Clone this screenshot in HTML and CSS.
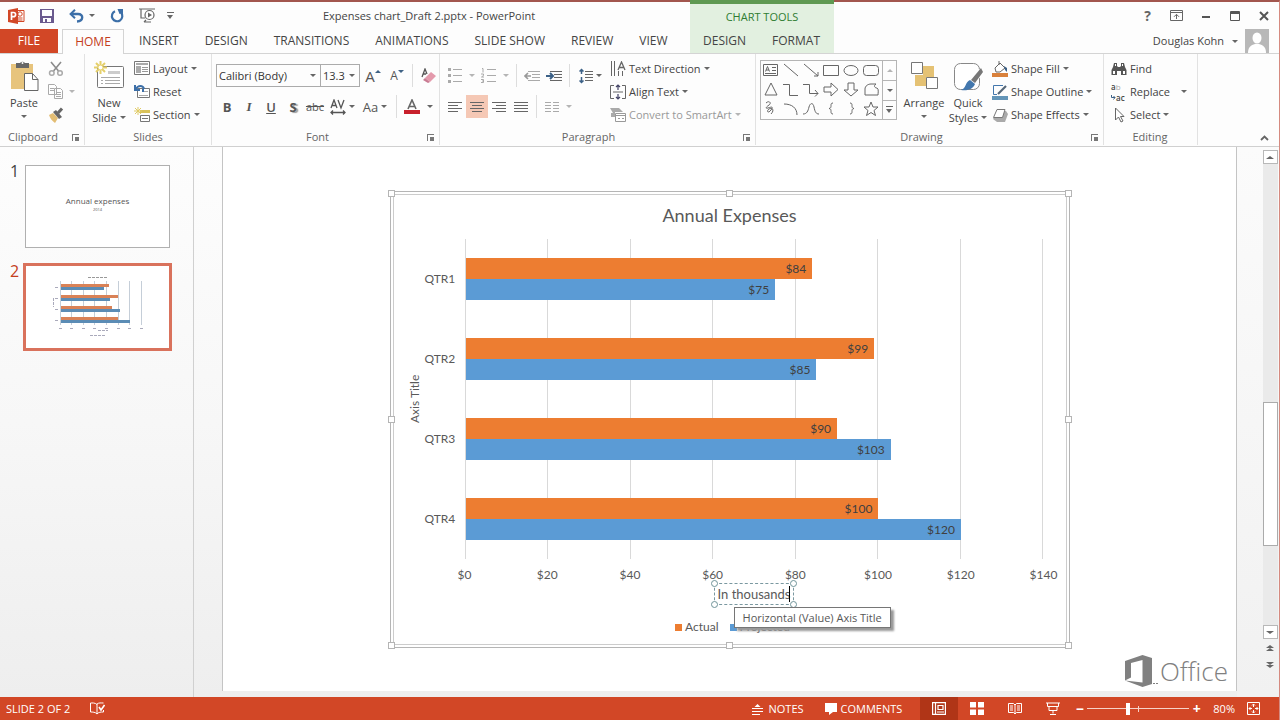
FILE: index.html
```html
<!DOCTYPE html>
<html lang="en">
<head>
<meta charset="utf-8">
<title>Expenses chart_Draft 2.pptx - PowerPoint</title>
<link rel="stylesheet" href="styles.css">
</head>
<body>
<div class="app">
  <header class="header">
    <div class="titlebar">
      <div class="qat">
        <svg class="app-icon" width="17" height="16" viewBox="0 0 17 16"><path fill="#fff" stroke="#d24726" d="M9 2.5h7v11H9z"/><circle cx="12" cy="6" r="2.2" fill="none" stroke="#d24726"/><path stroke="#d24726" d="M10 10h4.500M10 12h4.500"/><path fill="#d24726" d="M0 2l10-2v16L0 14z"/><path fill="none" stroke="#fff" stroke-width="1.700" d="M3.500 12V4.500h2a2 2 0 0 1 0 4.200h-2"/></svg>
        <button class="qbtn" aria-label="Save"><svg width="14" height="14" viewBox="0 0 14 14"><path fill="#6a5a8e" d="M0 0h14v14H0zM2 1v6h10V1zM3 9v4h2v-3h2v3h4V9z" fill-rule="evenodd"/></svg></button>
        <button class="qbtn undo" aria-label="Undo"><svg width="15" height="14" viewBox="0 0 15 14"><path fill="none" stroke="#3c6fa8" stroke-width="2.400" d="M2 5h7c6 0 5.500 7-1 7.500"/><path fill="none" stroke="#3c6fa8" stroke-width="2" d="M6 0.800L1.600 5 6 9.200"/></svg><i class="caret"></i></button>
        <button class="qbtn" aria-label="Repeat"><svg width="14" height="14" viewBox="0 0 14 14"><path fill="none" stroke="#3c6fa8" stroke-width="2.200" d="M5 2.300a5.200 5.200 0 1 0 6 1.300"/><path fill="#3c6fa8" d="M7.500 0H13v6l-2-1.500L9.500 5z"/></svg></button>
        <button class="qbtn" aria-label="Start From Beginning"><svg width="17" height="15" viewBox="0 0 17 15"><path fill="none" stroke="#666" stroke-width="1.200" d="M0 1h16M2 1v9h4M5 14h7M7 12l-2 2"/><circle cx="10.500" cy="7" r="4.500" fill="#fff" stroke="#666" stroke-width="1.200"/><path fill="#666" d="M9 4.500l4 2.500-4 2.500z"/></svg></button>
        <button class="qbtn custom" aria-label="Customize Quick Access Toolbar"><i class="caret bar"></i></button>
      </div>
      <h1 class="doc-title">Expenses chart_Draft 2.pptx - PowerPoint</h1>
    </div>
    <nav class="tabs">
      <button class="tab file">FILE</button>
      <button class="tab home">HOME</button>
      <button class="tab">INSERT</button>
      <button class="tab">DESIGN</button>
      <button class="tab">TRANSITIONS</button>
      <button class="tab">ANIMATIONS</button>
      <button class="tab">SLIDE SHOW</button>
      <button class="tab">REVIEW</button>
      <button class="tab">VIEW</button>
    </nav>
    <div class="context">
      <div class="context-title">CHART TOOLS</div>
      <div class="context-tabs"><button class="tab">DESIGN</button><button class="tab">FORMAT</button></div>
    </div>
    <div class="window-buttons">
      <button class="wbtn help" aria-label="Help">?</button>
      <button class="wbtn" aria-label="Ribbon Display Options"><svg width="13" height="11" viewBox="0 0 13 11"><path fill="none" stroke="#666" d="M.5.500h12v10H.5zM.5 2.500h12M6.500 9V4.500M4 6.800l2.500-2.500L9 6.800"/></svg></button>
      <button class="wbtn" aria-label="Minimize"><svg width="10" height="11" viewBox="0 0 10 11"><path stroke="#555" stroke-width="2" d="M1 7h8"/></svg></button>
      <button class="wbtn" aria-label="Restore"><svg width="10" height="10" viewBox="0 0 10 10"><path fill="none" stroke="#555" d="M.5.500h9v9h-9z"/><path stroke="#555" stroke-width="2" d="M0 2h10"/></svg></button>
      <button class="wbtn" aria-label="Close"><svg width="10" height="10" viewBox="0 0 10 10"><path stroke="#555" stroke-width="2" d="M1 1l8 8M9 1L1 9"/></svg></button>
    </div>
    <div class="account">
      <button class="user">Douglas Kohn<i class="caret"></i></button>
      <svg width="24" height="24" viewBox="0 0 24 24"><path fill="#b8b8b8" d="M0 0h24v24H0z"/><ellipse cx="12" cy="9" rx="4.500" ry="5.500" fill="#fff"/><path fill="#fff" d="M3 24c0-6 3-8 7-9h4c4 1 7 3 7 9z"/></svg>
    </div>
  </header>

  <div class="ribbon">
    <section class="group clipboard">
      <div class="body">
        <button class="big paste"><svg width="29" height="32" viewBox="0 0 29 32"><path fill="#e7c47d" d="M1 4h22v25H1z"/><path fill="#666" d="M6 3h4a3 3 0 0 1 5 0h4v5H6z"/><circle cx="12.500" cy="3" r="1" fill="#fff"/><path fill="#fff" stroke="#666" d="M14.500 13.500h8l5.500 6v11H14.500zM22.500 13.500v6H28"/></svg><span>Paste</span><i class="caret"></i></button>
        <div class="stack icons">
          <button class="row" aria-label="Cut"><svg width="16" height="16" viewBox="0 0 16 16"><path fill="none" stroke="#8b8b8b" stroke-width="1.600" d="M3 1l7.500 9M13 1L5.500 10"/><circle cx="3.800" cy="12" r="2.300" fill="none" stroke="#aaa" stroke-width="1.500"/><circle cx="12" cy="12" r="2.300" fill="none" stroke="#aaa" stroke-width="1.500"/></svg></button>
          <button class="row" aria-label="Copy"><svg width="16" height="15" viewBox="0 0 16 15"><path fill="#fff" stroke="#aaa" d="M.5.500h6l2 2v8h-8zM2 4.500h4M2 6.500h4M6.500 4.500h6l2 2v8h-8zM8 8.500h5M8 10.500h5M8 12.500h5"/></svg><i class="caret pale"></i></button>
          <button class="row" aria-label="Format Painter"><svg width="16" height="16" viewBox="0 0 16 16"><path fill="#e3bd73" d="M1 8l4-2 5 5-3 5C4 14 2 11 1 8z"/><path fill="#666" d="M5 5l3-2 6 7-3 2z"/><path stroke="#666" stroke-width="3" d="M10 6l4-4.500"/></svg></button>
        </div>
      </div>
      <footer>Clipboard<i class="launch"></i></footer>
    </section>
    <section class="group slides">
      <div class="body">
        <button class="big newslide"><svg width="31" height="32" viewBox="0 0 31 32"><rect x="3.500" y="6.500" width="26" height="21" rx="1" fill="#fff" stroke="#777"/><path fill="#ccc" d="M14 11h12v3H14z"/><path stroke="#aaa" d="M7 17.500h19M7 20.500h2m2 0h15M7 23.500h2m2 0h15"/><path stroke="#e5d06b" stroke-width="2" d="M6.500 1v13M0 7.500h13M2 3l9 9M11 3l-9 9"/><circle cx="6.500" cy="7.500" r="2" fill="#fff"/></svg><span>New</span><span>Slide<i class="caret"></i></span></button>
        <div class="stack">
          <button class="row"><svg width="16" height="15" viewBox="0 0 16 15"><path fill="#fff" stroke="#777" d="M.5.500h15v13H.5z"/><path fill="#aaa" d="M2 2h12v2H2zM2 5h5v7H2z"/><path stroke="#999" d="M8 6.500h6M8 8.500h6M8 10.500h6"/></svg>Layout<i class="caret"></i></button>
          <button class="row"><svg width="16" height="15" viewBox="0 0 16 15"><path fill="#fff" stroke="#777" d="M3.500 4.500h12v9h-12z"/><path stroke="#aaa" d="M10 7.500h4M5 11.500h9"/><path fill="none" stroke="#3c6fa8" stroke-width="2" d="M2 5c2-4 7-4 8 0M1 1v5h5M9 5v3"/></svg>Reset</button>
          <button class="row"><svg width="16" height="16" viewBox="0 0 16 16"><path fill="#fff" stroke="#777" d="M6.500 8.500h9v6h-9zM8 11.500h6"/><path fill="#d9c25a" d="M6 3h10v3H6z"/><path stroke="#e0cb66" d="M4 0v8M0 4h8M1 1l6 6M7 1L1 7"/></svg>Section<i class="caret"></i></button>
        </div>
      </div>
      <footer>Slides</footer>
    </section>
    <section class="group font">
      <div class="body lines">
        <div class="line">
          <span class="combo family"><select aria-label="Font"><option>Calibri (Body)</option></select><i class="caret"></i></span>
          <span class="combo size"><select aria-label="Font Size"><option>13.3</option></select><i class="caret"></i></span>
          <button class="tool w26" aria-label="Increase Font Size"><span class="letter">A</span><svg width="6" height="14" viewBox="0 0 6 14"><path fill="#3f6285" d="M0 4l3-3 3 3z"/></svg></button>
          <button class="tool w22" aria-label="Decrease Font Size"><span class="letter small">A</span><svg width="6" height="14" viewBox="0 0 6 14"><path fill="#3f6285" d="M0 1l3 3 3-3z"/></svg></button>
          <i class="sep"></i>
          <button class="tool w22" aria-label="Clear All Formatting"><svg width="15" height="16" viewBox="0 0 15 16"><path fill="none" stroke="#555" stroke-width="1.300" d="M1 9L4 1l2 5M2 6h3"/><path fill="#e49aac" d="M10 4l5 4-6 6-5-4z"/><path fill="#c97b93" d="M4 10l5 4-2 1-5-3z"/></svg></button>
        </div>
        <div class="line">
          <button class="tool w22 b">B</button>
          <button class="tool w22 i">I</button>
          <button class="tool w22 u">U</button>
          <button class="tool w22 s">S</button>
          <button class="tool w22 strike">abc</button>
          <button class="tool w32" aria-label="Character Spacing"><svg width="16" height="16" viewBox="0 0 16 16"><path fill="none" stroke="#555" stroke-width="1.300" d="M1 9l3-8 3 8M2 6.500h4M8 1l3 8 3-8M1 13.500h14M3 11.500l-2 2 2 2M13 11.500l2 2-2 2"/></svg><i class="caret"></i></button>
          <button class="tool w34 case">Aa<i class="caret"></i></button>
          <i class="sep"></i>
          <button class="tool w34" aria-label="Font Color"><svg width="16" height="16" viewBox="0 0 16 16"><path fill="none" stroke="#666" stroke-width="1.600" d="M4 10L8 1l4 9M5 7.500h6"/><path fill="#c8202c" d="M0 11h16v4H0z"/></svg><i class="caret far"></i></button>
        </div>
      </div>
      <footer>Font<i class="launch"></i></footer>
    </section>
    <section class="group paragraph">
      <div class="body">
        <div class="lines paratools">
          <div class="line">
            <button class="tool w34" aria-label="Bullets"><svg width="14" height="15" viewBox="0 0 14 15"><path fill="#aaa" d="M0 0h3v3H0zM0 6h3v3H0zM0 12h3v3H0z"/><path stroke="#aaa" d="M5 1.500h9M5 7.500h9M5 13.500h9"/></svg><i class="caret far pale"></i></button>
            <button class="tool w34" aria-label="Numbering"><svg width="15" height="15" viewBox="0 0 15 15"><path fill="none" stroke="#aaa" d="M1 .500h1v4M0 6h2.500v1.500L.5 9H3M0 11.500h2.500v3H0M1 13h1.500M6 1.500h9M6 7.500h9M6 13.500h9"/></svg><i class="caret far pale"></i></button>
            <i class="sep"></i>
            <button class="tool w22" aria-label="Decrease List Level"><svg width="16" height="12" viewBox="0 0 16 12"><path stroke="#aaa" d="M4 1.500h12M8 4.500h8M8 7.500h8M4 10.500h12"/><path fill="none" stroke="#999" stroke-width="1.600" d="M7 6H1M4 3L1 6l3 3"/></svg></button>
            <button class="tool w22" aria-label="Increase List Level"><svg width="16" height="12" viewBox="0 0 16 12"><path stroke="#666" d="M4 1.500h12M8 4.500h8M8 7.500h8M4 10.500h12"/><path fill="none" stroke="#3c6187" stroke-width="2" d="M0 6h7M4 3l3 3-3 3"/></svg></button>
            <i class="sep"></i>
            <button class="tool w32" aria-label="Line Spacing"><svg width="14" height="16" viewBox="0 0 14 16"><path stroke="#666" d="M6 3.500h8M6 6.500h8M6 9.500h8M6 12.500h8"/><path fill="none" stroke="#3c6187" stroke-width="1.500" d="M2.500 1v5M.5 3.500l2-2 2 2M2.500 9v6M.5 12.500l2 2 2-2"/></svg><i class="caret"></i></button>
          </div>
          <div class="line">
            <button class="tool w22" aria-label="Align Left"><svg width="14" height="12" viewBox="0 0 14 12"><path stroke="#666" d="M0 1.500h14M0 4.500h10M0 7.500h14M0 10.500h10"/></svg></button>
            <button class="tool w22 active" aria-label="Center"><svg width="14" height="12" viewBox="0 0 14 12"><path stroke="#666" d="M0 1.500h14M2 4.500h10M0 7.500h14M2 10.500h10"/></svg></button>
            <button class="tool w22" aria-label="Align Right"><svg width="14" height="12" viewBox="0 0 14 12"><path stroke="#666" d="M0 1.500h14M4 4.500h10M0 7.500h14M4 10.500h10"/></svg></button>
            <button class="tool w22" aria-label="Justify"><svg width="14" height="12" viewBox="0 0 14 12"><path stroke="#666" d="M0 1.500h14M0 4.500h14M0 7.500h14M0 10.500h14"/></svg></button>
            <i class="sep"></i>
            <button class="tool w34" aria-label="Columns"><svg width="14" height="12" viewBox="0 0 14 12"><path stroke="#aaa" d="M0 1.500h6m2 0h6M0 4.500h6m2 0h6M0 7.500h6m2 0h6M0 10.500h6m2 0h6"/></svg><i class="caret far pale"></i></button>
          </div>
        </div>
        <div class="stack">
          <button class="row"><svg width="16" height="16" viewBox="0 0 16 16"><path stroke="#666" d="M1.500 0v15M4.500 0v15M8.500 10v5M12.500 10v5"/><path fill="none" stroke="#666" stroke-width="1.300" d="M8 9l3.500-8L15 9M9 6.500h5"/></svg>Text Direction<i class="caret"></i></button>
          <button class="row"><svg width="16" height="16" viewBox="0 0 16 16"><path fill="none" stroke="#666" d="M4 1.500H.5v13H4M12 1.500h3.500v13H12M3 8h10"/><path fill="none" stroke="#446" stroke-width="1.200" d="M8 1v5M6 3l2-2 2 2M8 10v5M6 13l2 2 2-2"/></svg>Align Text<i class="caret"></i></button>
          <button class="row disabled" disabled><svg width="16" height="16" viewBox="0 0 16 16"><path fill="#aaa" d="M0 1h9l4 4H5v5H1V6h2z"/><path fill="#fff" stroke="#999" d="M5.500 6.500h10v8h-10zM5 8.500h11M8 11.500h2m2 0h2"/></svg>Convert to SmartArt<i class="caret pale"></i></button>
        </div>
      </div>
      <footer>Paragraph<i class="launch"></i></footer>
    </section>
    <section class="group drawing">
      <div class="body">
        <div class="gallery">
          <div class="shapes">
            <svg viewBox="0 0 20 19"><path d="M2.500 3.500h14v11h-14zM11 6.500h4M11 9.500h4M4 12.500h11M4.500 10.500l2-5 2 5M5 9h3"/></svg>
            <svg viewBox="0 0 20 19"><path d="M3 3l14 12"/></svg>
            <svg viewBox="0 0 20 19"><path d="M3 3l14 12M17 11v4h-4"/></svg>
            <svg viewBox="0 0 20 19"><path d="M2.500 4.500h15v10h-15z"/></svg>
            <svg viewBox="0 0 20 19"><ellipse cx="10" cy="9.500" rx="7" ry="5"/></svg>
            <svg viewBox="0 0 20 19"><rect x="2.500" y="4.500" width="15" height="10" rx="3"/></svg>
            <svg viewBox="0 0 20 19"><path d="M10 3l6 12H4z"/></svg>
            <svg viewBox="0 0 20 19"><path d="M2 4.500h6.500v11H17"/></svg>
            <svg viewBox="0 0 20 19"><path d="M2 4.500h6.500v9H17M14 10l3 3.500-3 3"/></svg>
            <svg viewBox="0 0 20 19"><path d="M3 7h7V3l7 6.500-7 6.500v-4H3z"/></svg>
            <svg viewBox="0 0 20 19"><path d="M7 3h6v7h4l-7 6-7-6h4z"/></svg>
            <svg viewBox="0 0 20 19"><path d="M4 15V9c0-3 3-5 6-5h5c-3 2-1 4 1 4 2 1 1 5 1 7z"/></svg>
            <svg viewBox="0 0 20 19"><path d="M5 4c3-3 6 0 3 2s-4 4-1 3 6-2 3 2-5 1-2-1 6 1 2 5"/></svg>
            <svg viewBox="0 0 20 19"><path d="M3 5c8 0 13 4 13 11"/></svg>
            <svg viewBox="0 0 20 19"><path d="M2 15c4 0 5-3 6-7s4-5 5 0 2 7 5 7"/></svg>
            <svg viewBox="0 0 20 19"><path d="M12 4c-4 0 0 5-4 5.500 4 .500 0 5.500 4 5.500"/></svg>
            <svg viewBox="0 0 20 19"><path d="M9 4c4 0 0 5 4 5.500-4 .500 0 5.500-4 5.500"/></svg>
            <svg viewBox="0 0 20 19"><path d="M10 3l2 5h5l-4 3.500 1.500 5-4.500-3-4.500 3L7 11.500 3 8h5z"/></svg>
          </div>
          <div class="gallery-nav"><button aria-label="Previous shapes"><i class="caret up pale"></i></button><button aria-label="Next shapes"><i class="caret"></i></button><button aria-label="More shapes"><i class="caret bar"></i></button></div>
        </div>
        <button class="big arrange"><svg width="28" height="32" viewBox="0 0 28 32"><path fill="#e5c274" d="M13 6h11v11H13zM5 15h11v11H5z"/><path fill="#fff" stroke="#777" d="M1.500 2.500h11v11h-11zM16.500 17.500h11v11h-11z"/></svg><span>Arrange</span><i class="caret"></i></button>
        <button class="big quick"><svg width="31" height="32" viewBox="0 0 31 32"><rect x="1.500" y="3.500" width="25" height="26" rx="6" fill="#fff" stroke="#888"/><path stroke="#fff" stroke-width="6" d="M29 11L16 25"/><path fill="#777" d="M28 8l2 4-8 11-4-3z"/><path fill="#4377ad" d="M17 20l5 4c-2 5-7 7-14 6 5-1 4-8 9-10z"/></svg><span>Quick</span><span>Styles<i class="caret"></i></span></button>
        <div class="stack">
          <button class="row"><svg width="16" height="16" viewBox="0 0 16 16"><path fill="#d9813c" d="M0 12h16v4H0z"/><path fill="#fff" stroke="#666" d="M3 7l5-5 5 5-5 4H4zM7 4V0"/><path fill="#3c6187" d="M12 5l3 2v4l-2-2z"/></svg>Shape Fill<i class="caret"></i></button>
          <button class="row"><svg width="16" height="16" viewBox="0 0 16 16"><path fill="#6395b8" d="M0 12h16v4H0z"/><path fill="none" stroke="#4377ad" d="M11 1.500H1.500v9H5"/><path stroke="#567" stroke-width="2.200" d="M6 10l8-8"/></svg>Shape Outline<i class="caret"></i></button>
          <button class="row"><svg width="16" height="16" viewBox="0 0 16 16"><path fill="#aaa" d="M6 4h8l2 3-3 8H5l-4-3z"/><path fill="#fff" stroke="#777" d="M5 2.500h8l-2.500 8H1.500z"/></svg>Shape Effects<i class="caret"></i></button>
        </div>
      </div>
      <footer>Drawing<i class="launch"></i></footer>
    </section>
    <section class="group editing">
      <div class="body">
        <div class="stack">
          <button class="row"><svg width="16" height="14" viewBox="0 0 16 14"><path fill="#555" d="M3 1h3v3l1 1h2l1-1V1h3l1 4 1.500 3v5H10V9H6v4H.5V8L2 5z"/><path fill="#fff" d="M2 9h2v3H2zM12 9h2v3h-2zM4 2h1v2H4zM11 2h1v2h-1z"/></svg>Find</button>
          <button class="row"><span class="replace-icon" aria-hidden="true"><b>a<em>b</em></b><b><svg width="5" height="5" viewBox="0 0 5 5"><path fill="none" stroke="#3c6187" d="M.5 0v2.500H4M2.500 1L4 2.500l-1.500 2"/></svg>ac</b></span>Replace<i class="caret far"></i></button>
          <button class="row"><svg width="16" height="16" viewBox="0 0 16 16"><path fill="#fff" stroke="#666" d="M4.500 1v12l3-3 2.500 5 2-1-2.500-4.500h3.500z"/></svg>Select<i class="caret"></i></button>
        </div>
      </div>
      <footer>Editing</footer>
    </section>
    <button class="collapse" aria-label="Collapse the Ribbon"><svg width="9" height="6" viewBox="0 0 9 6"><path fill="none" stroke="#666" stroke-width="1.800" d="M1 5l3.500-3.500L8 5"/></svg></button>
  </div>

  <main class="workspace">
    <aside class="thumbs">
      <div class="thumb"><span class="num">1</span><button class="preview" aria-label="Slide 1"><span class="p-title">Annual expenses</span><span class="p-sub">2014</span></button></div>
      <div class="thumb selected"><span class="num">2</span><button class="preview" aria-label="Slide 2">
        <svg width="95" height="66" viewBox="0 0 95 66"><path stroke="#999" d="M38 3.500h20" stroke-dasharray="3 1"/><path stroke="#c5ced8" d="M10.500 7v44M21.500 7v44M33.500 7v44M44.500 7v44M56.500 7v44M68.500 7v44M79.500 7v44M91.500 7v44"/><path fill="#d98257" d="M11 10h48v3H11zM11 21h57v3H11zM11 32h51v3H11zM11 43h57v3H11z"/><path fill="#5b8cb5" d="M11 13h43v3H11zM11 24h49v3H11zM11 35h59v3H11zM11 46h69v3H11z"/><path stroke="#aab" d="M5 13.500h4M5 24.500h4M5 35.500h4M5 46.500h4M3.500 24v9M9 54.500h3m8 0h3m9 0h3m8 0h3m9 0h3m9 0h3m8 0h3m9 0h3M48 56.500h10M40 61.500h16" stroke-dasharray="3 1"/></svg>
      </button></div>
    </aside>
    <div class="gutter"></div>
    <section class="slide">
      <figure class="chart">
        <i class="handle tl"></i><i class="handle tc"></i><i class="handle tr"></i><i class="handle ml"></i><i class="handle mr"></i><i class="handle bl"></i><i class="handle bc"></i><i class="handle br"></i>
        <figcaption>Annual Expenses</figcaption>
        <div class="chart-body">
          <div class="y-title"><span>Axis Title</span></div>
          <div class="cats"><span>QTR1</span><span>QTR2</span><span>QTR3</span><span>QTR4</span></div>
          <div class="plot">
            <div class="grid"><i></i><i></i><i></i><i></i><i></i><i></i><i></i><i></i></div>
            <div class="bars">
              <div class="pair"><div class="bar actual" style="width:60%">$84</div><div class="bar projected" style="width:53.570%">$75</div></div>
              <div class="pair"><div class="bar actual" style="width:70.710%">$99</div><div class="bar projected" style="width:60.710%">$85</div></div>
              <div class="pair"><div class="bar actual" style="width:64.290%">$90</div><div class="bar projected" style="width:73.570%">$103</div></div>
              <div class="pair"><div class="bar actual" style="width:71.430%">$100</div><div class="bar projected" style="width:85.710%">$120</div></div>
            </div>
          </div>
          <div class="ticks"><span>$0</span><span>$20</span><span>$40</span><span>$60</span><span>$80</span><span>$100</span><span>$120</span><span>$140</span></div>
          <div class="x-title"><div class="x-box">In thousands<i class="dot a"></i><i class="dot b"></i><i class="dot c"></i><i class="dot d"></i><div class="tooltip" role="tooltip">Horizontal (Value) Axis Title</div></div></div>
        </div>
        <div class="legend"><span class="key actual-key"></span>Actual<span class="key projected-key"></span>Projected</div>
      </figure>
      <div class="office"><svg width="33" height="32" viewBox="0 0 33 32"><path fill="#808080" d="M0 6L17.500 0 27 3v26l-9.500 3L0 25.500l17.500 2V5L6 8v14.500L0 25.500z"/><path fill="#808080" d="M28 28h2v1h-2zM31 28h2v1h-2z"/></svg>Office</div>
    </section>
    <div class="scroll">
      <button class="sb" aria-label="Scroll up"><i class="caret up"></i></button>
      <div class="track"><div class="grip"></div></div>
      <button class="sb" aria-label="Scroll down"><i class="caret"></i></button>
      <button class="sp" aria-label="Previous Slide"><i class="caret up"></i><i class="caret up"></i></button>
      <button class="sp" aria-label="Next Slide"><i class="caret"></i><i class="caret"></i></button>
    </div>
  </main>

  <footer class="status">
    <span>SLIDE 2 OF 2</span>
    <button class="proof" aria-label="Spelling"><svg width="15" height="13" viewBox="0 0 15 13"><path fill="none" stroke="#fff" d="M7 2.500C5 .500 2 1 .5 1v9c2 0 5 0 6.500 2 1.500-2 4-2 6.500-2V8M7 2v10M7 2c2-1.500 4-1 6.500-1"/><path fill="none" stroke="#fff" stroke-width="1.600" d="M9 5l2 3 3.500-5"/></svg></button>
    <button class="notes"><svg width="11" height="12" viewBox="0 0 11 12"><path stroke="#fff" d="M0 5.500h11M0 8.500h11M0 11.500h8"/><path fill="#fff" d="M2.500 4l3-3 3 3z"/></svg>NOTES</button>
    <button class="comments"><svg width="12" height="12" viewBox="0 0 12 12"><path fill="#fff" d="M0 0h12v9H8l-4 3V9H0z"/></svg>COMMENTS</button>
    <div class="views">
      <button class="on" aria-label="Normal"><svg width="14" height="13" viewBox="0 0 14 13"><path fill="none" stroke="#fff" stroke-width="1.200" d="M.6.600h12.800v11.800H.6zM3.500 1v11M6 3.500h5v4H6zM5 10h7"/></svg></button>
      <button aria-label="Slide Sorter"><svg width="14" height="13" viewBox="0 0 14 13"><path fill="#fff" d="M0 0h6v5.500H0zM8 0h6v5.500H8zM0 7.500h6V13H0zM8 7.500h6V13H8z"/></svg></button>
      <button aria-label="Reading View"><svg width="14" height="13" viewBox="0 0 14 13"><path fill="none" stroke="#fff" d="M.5 1.500h5L7 3l1.500-1.500h5v9h-5L7 12l-1.500-1.500h-5zM7 3v9M2 4h3M2 6h3M2 8h3M9 4h3M9 6h3M9 8h3"/></svg></button>
      <button aria-label="Slide Show"><svg width="14" height="13" viewBox="0 0 14 13"><path fill="none" stroke="#fff" d="M0 1h14M1.500 1v3.500h11V1M3 5v3.500h8V5M7 8.500v3M4 12.500h6"/></svg></button>
    </div>
    <button class="zoom" aria-label="Zoom out">−</button>
    <input type="range" class="slider" aria-label="Zoom level" min="0" max="100" value="39">
    <button class="zoom" aria-label="Zoom in">+</button>
    <span class="pct">80%</span>
    <button class="fit" aria-label="Fit slide to window"><svg width="13" height="13" viewBox="0 0 13 13"><path fill="none" stroke="#fff" d="M.5.500h12v12H.5zM6.500 2v3M6.500 8v3M2 6.500h3M8 6.500h3M5 3.500l1.500-1.500L8 3.500M5 9.500L6.500 11 8 9.500M3.500 5L2 6.500 3.500 8M9.500 5L11 6.500 9.500 8"/></svg></button>
  </footer>
</div>
</body>
</html>
```
FILE: styles.css
```css
* { box-sizing: border-box; }
body { margin: 0; font: 11px/16px "Open Sans", "Noto Sans", sans-serif; color: #444; background: #fff; }
button { font: inherit; color: inherit; background: none; border: 0; padding: 0; display: flex; align-items: center; white-space: nowrap; }
svg { flex: none; }
.app { min-height: 100vh; display: flex; flex-direction: column; border-top: 2px solid #a2564e; border-right: 1px solid #d58a80; background: #fdfdfd; }

.caret { flex: none; width: 0; height: 0; border: 3px solid transparent; border-top-color: #666; border-bottom: 0; margin-left: 4px; }
.caret.up { border-top: 0; border-bottom: 3px solid #666; }
.caret.pale { border-top-color: #b5b5b5; }
.caret.up.pale { border-bottom-color: #b5b5b5; }
.caret.bar { width: 7px; height: 7px; border: 0; margin: 0; background: linear-gradient(#666, #666) top / 7px 1px no-repeat; display: flex; align-items: flex-end; }
.caret.bar::after { content: ""; border: 3px solid transparent; border-top: 4px solid #666; border-bottom: 0; }

/* Header */
.header { display: grid; grid-template-columns: minmax(0, 690px) 144px 1fr; grid-template-rows: 27px 24px; border-bottom: 1px solid #d4d4d4; }
.titlebar { display: flex; align-items: center; }
.qat { display: flex; align-items: center; gap: 15px; width: 168px; padding-left: 8px; }
.qat .undo .caret { margin-left: 5px; }
.qat .custom { margin-left: -4px; }
.doc-title { flex: 1; margin: 0; font-size: 11px; font-weight: 400; text-align: center; }
.tabs { grid-row: 2; grid-column: 1; display: flex; }
.tab { flex: none; padding: 0 13px; font-size: 12px; color: #444; }
.tab.file { width: 58px; justify-content: center; padding: 0; background: #d24726; color: #fff; margin-right: 4px; }
.tab.home { width: 62px; justify-content: center; padding: 0 0 1px; color: #c43e1c; border: 1px solid #d4d4d4; border-bottom: 0; background: #fdfdfd; margin-bottom: -1px; margin-right: 2px; }
.context { grid-row: 1 / 3; grid-column: 2; display: grid; grid-template-rows: 25px 24px; background: #e2f0e0; margin-top: -2px; border-top: 4px solid #5f9952; }
.context-title { text-align: center; line-height: 25px; color: #2f7d32; }
.context-tabs { display: flex; }
.window-buttons { grid-column: 3; grid-row: 1; display: flex; justify-content: flex-end; padding-right: 1px; }
.wbtn { width: 29px; justify-content: center; }
.help { font-size: 14px; font-weight: 700; color: #666; }
.account { grid-column: 3; grid-row: 2; display: flex; justify-content: flex-end; gap: 7px; padding-right: 10px; }
.user .caret { margin-left: 8px; }

/* Ribbon */
.ribbon { display: flex; height: 93px; border-bottom: 1px solid #d0d0d0; }
.group { display: flex; flex-direction: column; padding-top: 3px; border-right: 1px solid #e2e2e2; margin-bottom: 1px; }
.group .body { flex: none; display: flex; height: 69px; }
.group footer { display: flex; justify-content: center; align-items: center; position: relative; color: #666; line-height: 16px; padding-top: 3px; }
.launch { position: absolute; right: 5px; bottom: 4px; width: 7px; height: 7px; border: solid #777; border-width: 1px 0 0 1px; background: linear-gradient(#777, #777) right bottom / 4px 4px no-repeat; }
.big { flex-direction: column; line-height: 15px; padding-top: 3px; }
.big span { display: flex; align-items: center; }
.big svg { margin-bottom: 3px; }
.big > .caret { margin: 5px 0 0; }
.big span .caret { margin-left: 3px; }
.stack { display: grid; grid-template-rows: repeat(3, 23px); }
.row { gap: 3px; }
.row .caret { margin-left: 0; }
.row .caret.far { margin-left: 8px; }
.row.disabled { color: #999; }
.clipboard { width: 85px; }
.clipboard footer { justify-content: flex-start; padding-left: 8px; }
.paste { width: 40px; margin: 0 4px; }
.icons .row { gap: 5px; }
.slides { width: 127px; }
.newslide { width: 42px; margin: 0 4px 0 3px; }
.font { width: 228px; }
.lines { display: flex; flex-direction: column; padding-top: 7px; gap: 8px; }
.group .lines.body { flex-direction: column; padding: 7px 0 0 4px; }
.line { display: flex; height: 23px; align-items: center; }
.combo { position: relative; height: 23px; border: 1px solid #ababab; }
.combo + .combo { margin-left: -1px; }
.combo select { appearance: none; width: 100%; height: 100%; border: 0; background: none; padding: 0 2px; font: inherit; font-size: 11px; color: #333; }
.combo .caret { position: absolute; right: 4px; top: 9px; pointer-events: none; }
.family { width: 105px; }
.size { width: 40px; }
.tool { height: 23px; justify-content: center; color: #555; font-size: 12px; }
.w22 { width: 22px; }
.w26 { width: 26px; }
.w32 { width: 32px; }
.w34 { width: 34px; }
.tool .caret { margin-left: 3px; }
.tool .caret.far { margin-left: 7px; }
.letter { font-size: 15px; }
.letter.small { font-size: 12px; }
.sep { width: 1px; height: 23px; margin: 0 4px; background: #ddd; }
.b, .i, .u, .s { font-weight: 700; font-size: 13px; }
.i { font-family: "Liberation Serif", serif; font-style: italic; }
.u { font-weight: 600; text-decoration: underline; }
.s { text-shadow: 2px 1px 1px #999; }
.strike { font-size: 11px; text-decoration: line-through; }
.case { font-size: 13px; }
.paragraph { width: 316px; }
.paratools { width: 170px; padding-left: 4px; }
.active { background: #f5c8b5; }
.drawing { width: 348px; }
.gallery { display: flex; height: 60px; margin: 3px 4px 0 4px; border: 1px solid #b5b5b5; }
.shapes { display: grid; grid-template-columns: repeat(6, 20px); grid-template-rows: repeat(3, 19px); width: 121px; }
.shapes svg { width: 20px; height: 19px; fill: none; stroke: #666; }
.gallery-nav { display: grid; grid-template-rows: repeat(3, 1fr); width: 14px; border-left: 1px solid #b5b5b5; }
.gallery-nav button { justify-content: center; }
.gallery-nav button + button { border-top: 1px solid #b5b5b5; }
.gallery-nav .caret { margin: 0; }
.arrange { width: 46px; }
.quick { width: 40px; margin: 0 4px 0 1px; }
.drawing footer { padding-right: 16px; }
.paragraph footer { padding-right: 18px; }
.font footer { padding-right: 16px; }
.editing { width: 94px; padding-left: 7px; }
.editing footer { padding-right: 8px; }
.replace-icon { width: 16px; display: flex; flex-direction: column; font-size: 8px; line-height: 11px; }
.replace-icon b { display: flex; align-items: center; font-weight: 600; }
.replace-icon em { font-style: normal; font-weight: 400; color: #aaa; }
.collapse { margin-left: auto; align-self: flex-end; padding: 5px 10px; }

/* Workspace */
.workspace { flex: 1; display: flex; background: linear-gradient(#fdfdfd, #f7f7f7 50%, #eee); }
.thumbs { width: 194px; border-right: 1px solid #d0d0d0; padding: 18px 0 0 10px; display: flex; flex-direction: column; gap: 15px; }
.thumb { display: flex; gap: 6px; }
.num { width: 9px; font-size: 16px; line-height: 12px; color: #444; }
.preview { width: 145px; height: 83px; flex-direction: column; justify-content: center; background: #fff; border: 1px solid #b0b0b0; color: #555; line-height: 10px; padding-bottom: 4px; }
.p-title { font-size: 8px; }
.p-sub { font-size: 4px; line-height: 8px; }
.selected .num { color: #c43e1c; line-height: 16px; }
.selected { gap: 4px; }
.selected .preview { width: 149px; height: 88px; border: 3px solid #d9725c; padding: 0; }
.gutter { width: 28px; }
.slide { position: relative; flex: 1; display: flex; justify-content: center; align-items: flex-start; margin-bottom: 6px; padding-top: 44px; background: #fff; border: solid #c4c4c4; border-width: 0 1px; }
.scroll { width: 42px; display: flex; flex-direction: column; align-items: center; padding: 3px 1px 24px 25px; background: linear-gradient(#fbfbfb, #f1f1f1); }
.sb { width: 15px; height: 14px; justify-content: center; border: 1px solid #b8b8b8; background: #fff; }
.scroll .caret { margin: 0; border-left-width: 4px; border-right-width: 4px; }
.track { flex: 1; width: 15px; display: grid; grid-template-rows: 237fr 144fr 79fr; background: #eaeaea; }
.grip { grid-row: 2; background: #fff; border: 1px solid #ababab; }
.sp { flex-direction: column; justify-content: center; height: 17px; }

/* Chart */
.chart { position: relative; width: 680px; margin: 0; padding: 11px 26px 12px 16px; border: 1px solid #b5b5b5; outline: 1px solid #ccc; outline-offset: -4px; font-family: Lato, "Open Sans", sans-serif; font-size: 12px; color: #595959; }
.chart figcaption { text-align: center; font-size: 18px; line-height: 24px; margin-right: -10px; }
.chart-body { display: grid; grid-template-columns: 16px 42px 579px; grid-template-rows: 320px 24px 22px; margin-top: 12px; }
.y-title { writing-mode: vertical-rl; transform: rotate(180deg); display: flex; align-items: center; justify-content: center; line-height: 16px; }
.cats { display: grid; grid-template-rows: repeat(4, 1fr); align-items: center; padding-left: 2px; }
.plot { display: grid; }
.grid, .bars { grid-area: 1 / 1; }
.grid { display: flex; justify-content: space-between; }
.grid i { width: 1px; background: #d9d9d9; }
.bars { display: grid; grid-template-rows: repeat(4, 1fr); padding-left: 1px; }
.pair { display: flex; flex-direction: column; justify-content: center; }
.bar { height: 21px; line-height: 21px; padding-right: 6px; text-align: right; color: #404040; }
.bar.actual, .actual-key { background: #ed7d31; }
.bar.projected, .projected-key { background: #5b9bd5; }
.ticks { grid-column: 3; display: flex; justify-content: space-between; align-items: center; padding-top: 8px; }
.ticks span { width: 0; display: flex; justify-content: center; }
.x-title { grid-column: 3; display: flex; justify-content: center; }
.x-box { position: relative; height: 22px; line-height: 20px; font-size: 13px; padding: 0 3px; border: 1px dashed #7a98a0; }
.x-box::after { content: ""; position: absolute; right: 3px; top: 2px; width: 1px; height: 16px; background: #000; }
.dot { position: absolute; width: 7px; height: 7px; border: 1px solid #6f9399; border-radius: 50%; background: #fff; }
.a { left: -4px; top: -4px; } .b { right: -4px; top: -4px; } .c { left: -4px; bottom: -4px; } .d { right: -4px; bottom: -4px; }
.tooltip { position: absolute; left: 19px; top: 23px; z-index: 2; padding: 0 8px; font: 11px/19px "Open Sans", sans-serif; white-space: nowrap; background: #fff; border: 1px solid #767676; box-shadow: 3px 3px 2px #999; color: #575757; }
.legend { display: flex; justify-content: center; align-items: center; line-height: 16px; margin-top: 14px; padding-left: 16px; }
.key { width: 7px; height: 7px; margin-right: 3px; }
.projected-key { margin-left: 11px; }
.handle { position: absolute; width: 7px; height: 7px; border: 1px solid #b5b5b5; background: #fff; z-index: 1; }
.tl, .ml, .bl { left: -3px; } .tr, .mr, .br { right: -3px; } .tc, .bc { left: calc(50% - 4px); }
.tl, .tc, .tr { top: -2px; } .bl, .bc, .br { bottom: -2px; } .ml, .mr { top: calc(50% - 4px); }
.office { position: absolute; right: 8px; bottom: 2px; display: flex; align-items: center; gap: 2px; color: #808080; font-size: 26px; line-height: 36px; font-weight: 300; }

/* Status bar */
.status { display: flex; align-items: center; height: 23px; padding: 0 19px 0 6px; background: #d24726; color: #fff; }
.proof { margin-left: 20px; }
.notes { margin-left: auto; gap: 6px; }
.comments { margin-left: 21px; gap: 4px; }
.views { display: flex; height: 23px; margin: 0 3px 0 18px; }
.views button { width: 38px; justify-content: center; }
.views .on { background: #b03517; }
.zoom { width: 9px; justify-content: center; font-size: 14px; font-weight: 700; }
.slider { appearance: none; width: 102px; height: 15px; margin: 0 3px; background: linear-gradient(#f7d2c8, #f7d2c8) center / 1px 6px no-repeat, linear-gradient(#f7d2c8, #f7d2c8) center / 100% 1px no-repeat; }
.slider::-webkit-slider-thumb { appearance: none; width: 4px; height: 12px; background: #fff; }
.pct { margin: 0 12px; }
```
